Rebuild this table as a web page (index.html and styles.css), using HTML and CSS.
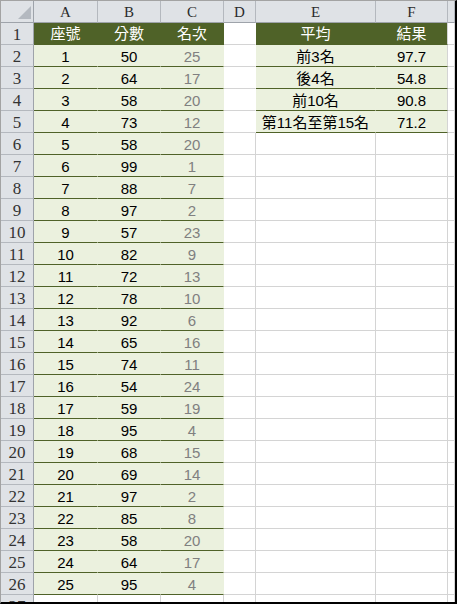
FILE: index.html
```html
<!DOCTYPE html>
<html lang="zh-Hant">
<head>
<meta charset="utf-8">
<title>Sheet</title>
<link rel="stylesheet" href="styles.css">
</head>
<body>
<div class="frame">
<div class="sheet">
<div class="corner"><svg width="32" height="21" viewBox="0 0 32 21"><polygon points="30,5 30,18 17,18" fill="#B4B9C0"/></svg></div>
<div class="ch">A</div><div class="ch">B</div><div class="ch">C</div><div class="ch">D</div><div class="ch">E</div><div class="ch">F</div><div class="ch"></div>

<div class="rh">1</div><div class="th">座號</div><div class="th">分數</div><div class="th">名次</div><div class="c nr"></div><div class="th">平均</div><div class="th f">結果</div><div class="c"></div>
<div class="rh">2</div><div class="td">1</div><div class="td">50</div><div class="td g">25</div><div class="c nr"></div><div class="td">前3名</div><div class="td f">97.7</div><div class="c"></div>
<div class="rh">3</div><div class="td">2</div><div class="td">64</div><div class="td g">17</div><div class="c nr"></div><div class="td">後4名</div><div class="td f">54.8</div><div class="c"></div>
<div class="rh">4</div><div class="td">3</div><div class="td">58</div><div class="td g">20</div><div class="c nr"></div><div class="td">前10名</div><div class="td f">90.8</div><div class="c"></div>
<div class="rh">5</div><div class="td">4</div><div class="td">73</div><div class="td g">12</div><div class="c nr"></div><div class="td">第11名至第15名</div><div class="td f">71.2</div><div class="c"></div>
<div class="rh">6</div><div class="td">5</div><div class="td">58</div><div class="td g">20</div><div class="c"></div><div class="c"></div><div class="c"></div><div class="c"></div>
<div class="rh">7</div><div class="td">6</div><div class="td">99</div><div class="td g">1</div><div class="c"></div><div class="c"></div><div class="c"></div><div class="c"></div>
<div class="rh">8</div><div class="td">7</div><div class="td">88</div><div class="td g">7</div><div class="c"></div><div class="c"></div><div class="c"></div><div class="c"></div>
<div class="rh">9</div><div class="td">8</div><div class="td">97</div><div class="td g">2</div><div class="c"></div><div class="c"></div><div class="c"></div><div class="c"></div>
<div class="rh">10</div><div class="td">9</div><div class="td">57</div><div class="td g">23</div><div class="c"></div><div class="c"></div><div class="c"></div><div class="c"></div>
<div class="rh">11</div><div class="td">10</div><div class="td">82</div><div class="td g">9</div><div class="c"></div><div class="c"></div><div class="c"></div><div class="c"></div>
<div class="rh">12</div><div class="td">11</div><div class="td">72</div><div class="td g">13</div><div class="c"></div><div class="c"></div><div class="c"></div><div class="c"></div>
<div class="rh">13</div><div class="td">12</div><div class="td">78</div><div class="td g">10</div><div class="c"></div><div class="c"></div><div class="c"></div><div class="c"></div>
<div class="rh">14</div><div class="td">13</div><div class="td">92</div><div class="td g">6</div><div class="c"></div><div class="c"></div><div class="c"></div><div class="c"></div>
<div class="rh">15</div><div class="td">14</div><div class="td">65</div><div class="td g">16</div><div class="c"></div><div class="c"></div><div class="c"></div><div class="c"></div>
<div class="rh">16</div><div class="td">15</div><div class="td">74</div><div class="td g">11</div><div class="c"></div><div class="c"></div><div class="c"></div><div class="c"></div>
<div class="rh">17</div><div class="td">16</div><div class="td">54</div><div class="td g">24</div><div class="c"></div><div class="c"></div><div class="c"></div><div class="c"></div>
<div class="rh">18</div><div class="td">17</div><div class="td">59</div><div class="td g">19</div><div class="c"></div><div class="c"></div><div class="c"></div><div class="c"></div>
<div class="rh">19</div><div class="td">18</div><div class="td">95</div><div class="td g">4</div><div class="c"></div><div class="c"></div><div class="c"></div><div class="c"></div>
<div class="rh">20</div><div class="td">19</div><div class="td">68</div><div class="td g">15</div><div class="c"></div><div class="c"></div><div class="c"></div><div class="c"></div>
<div class="rh">21</div><div class="td">20</div><div class="td">69</div><div class="td g">14</div><div class="c"></div><div class="c"></div><div class="c"></div><div class="c"></div>
<div class="rh">22</div><div class="td">21</div><div class="td">97</div><div class="td g">2</div><div class="c"></div><div class="c"></div><div class="c"></div><div class="c"></div>
<div class="rh">23</div><div class="td">22</div><div class="td">85</div><div class="td g">8</div><div class="c"></div><div class="c"></div><div class="c"></div><div class="c"></div>
<div class="rh">24</div><div class="td">23</div><div class="td">58</div><div class="td g">20</div><div class="c"></div><div class="c"></div><div class="c"></div><div class="c"></div>
<div class="rh">25</div><div class="td">24</div><div class="td">64</div><div class="td g">17</div><div class="c"></div><div class="c"></div><div class="c"></div><div class="c"></div>
<div class="rh">26</div><div class="td">25</div><div class="td">95</div><div class="td g">4</div><div class="c"></div><div class="c"></div><div class="c"></div><div class="c"></div>
<div class="rh">27</div><div class="c"></div><div class="c"></div><div class="c"></div><div class="c"></div><div class="c"></div><div class="c"></div><div class="c"></div>
</div>
</div>
</body>
</html>
```

FILE: styles.css
```css
html, body {
  margin: 0;
  padding: 0;
  background: #ffffff;
}

.frame {
  width: 457px;
  height: 604px;
  box-sizing: border-box;
  border-top: 1px solid #A3A3A3;
  border-left: 1px solid #A3A3A3;
  border-right: 2px solid #000000;
  border-bottom: 2px solid #000000;
  overflow: hidden;
}

.sheet {
  display: grid;
  grid-template-columns: 33px 64px 63px 63px 32px 120px 72px 7px;
  grid-auto-rows: 22px;
  font-family: "Liberation Sans", "Noto Sans CJK TC", sans-serif;
  font-size: 15px;
  color: #000000;
}

.sheet > div {
  box-sizing: border-box;
  border-right: 1px solid #D4D4D4;
  border-bottom: 1px solid #D4D4D4;
  display: flex;
  align-items: center;
  justify-content: center;
  white-space: nowrap;
  overflow: hidden;
  line-height: 21px;
}

.sheet > .corner {
  background: #DFE2E6;
  border-right: 1px solid #9EA3AA;
  border-bottom: 1px solid #9EA3AA;
  display: block;
}

.corner svg {
  display: block;
}

.sheet > .ch {
  background: #DFE2E6;
  border-right: 1px solid #B4B8BE;
  border-bottom: 1px solid #9EA3AA;
  font-family: "Liberation Serif", "Noto Sans CJK TC", serif;
  font-size: 15px;
  color: #2B2B2B;
  padding-top: 1px;
}

.sheet > .rh {
  background: #DFE2E6;
  border-right: 1px solid #9EA3AA;
  border-bottom: 1px solid #B4B8BE;
  font-family: "Liberation Serif", serif;
  font-size: 17px;
  color: #333333;
  padding-top: 2px;
}

.sheet > .th {
  background: #4F6228;
  color: #ffffff;
  border-right-color: #4F6228;
  border-bottom-color: #4F6228;
  font-size: 15px;
}

.sheet > .td {
  background: #EBF1DE;
  border-right-color: #EBF1DE;
  border-bottom-color: #4F6228;
  padding-top: 2px;
}

.sheet > .f {
  border-right-color: #D4D4D4;
}

.sheet > .nr {
  border-right-color: #ffffff;
}

.sheet > .g {
  color: #808080;
}
```
